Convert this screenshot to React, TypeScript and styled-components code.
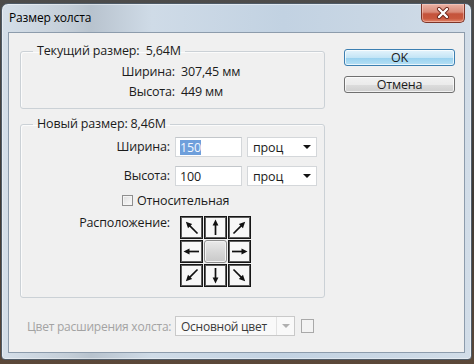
import React from 'react';
import styled, { createGlobalStyle } from 'styled-components';

const GlobalStyle = createGlobalStyle`
  html, body {
    margin: 0;
    padding: 0;
    background: #3b3631;
  }
  * {
    box-sizing: border-box;
  }
  body {
    font-family: "Open Sans", "Noto Sans", sans-serif;
    color: #1b1b1b;
    white-space: nowrap;
    letter-spacing: -0.15px;
  }
`;

const Backdrop = styled.div`
  width: 474px;
  height: 364px;
  padding: 3px 2px 4px 1px;
  overflow: hidden;
  background: linear-gradient(180deg, #4d4c4b 0%, #3e3934 55%, #5b4839 100%);
`;

const Window = styled.div`
  height: 100%;
  display: flex;
  flex-direction: column;
  padding: 0 6px 6px 6px;
  border: 1px solid #4f5b67;
  border-radius: 7px 7px 4px 4px;
  background:
    linear-gradient(90deg, #d5dfe9 0%, #c4ced8 14%, #b8c3ce 19%, #cfdbe7 32%, #c2d2e2 60%, #cbd8e5 85%, #d2dde8 100%);
  box-shadow: inset 0 0 0 1px rgba(255, 255, 255, 0.45);
`;

const TitleBar = styled.div`
  height: 28px;
  flex: none;
  display: flex;
  align-items: flex-start;
  justify-content: space-between;
  padding-left: 1px;
`;

const Title = styled.div`
  font-size: 12px;
  line-height: 27px;
  color: #000;
`;

const CloseButton = styled.div`
  width: 44px;
  height: 19px;
  display: flex;
  align-items: center;
  justify-content: center;
  border: 1px solid #7e3528;
  border-top: none;
  border-radius: 0 0 5px 5px;
  background: linear-gradient(180deg, #eab2a4 0%, #d98a78 45%, #c4533b 55%, #c9583e 80%, #e2866a 100%);
  box-shadow: inset 0 0 0 1px rgba(255, 220, 210, 0.45);
`;

const Client = styled.div`
  flex: 1;
  display: flex;
  align-items: flex-start;
  padding: 10px 0 0 11px;
  border: 1px solid #8d9cac;
  background: #f0f0f0;
`;

const MainColumn = styled.div`
  width: 305px;
  display: flex;
  flex-direction: column;
`;

const ButtonColumn = styled.div`
  width: 111px;
  margin-left: 19px;
  padding-top: 6px;
  display: flex;
  flex-direction: column;
  gap: 10px;
`;

const DialogButton = styled.div<{ $primary?: boolean }>`
  height: 17px;
  display: flex;
  align-items: center;
  justify-content: center;
  font-size: 12.5px;
  border-radius: 3px;
  border: 1px solid ${p => (p.$primary ? '#3c7fb1' : '#707070')};
  background: ${p =>
    p.$primary
      ? 'linear-gradient(180deg, #e5f4fc 0%, #c4e5f6 50%, #98d1ef 51%, #b6e0f5 100%)'
      : 'linear-gradient(180deg, #f2f2f2 0%, #ebebeb 50%, #dddddd 51%, #cfcfcf 100%)'};
  box-shadow: inset 0 0 0 1px rgba(255, 255, 255, 0.7);
`;

const GroupBox = styled.fieldset<{ $gap?: number }>`
  margin: ${p => p.$gap || 0}px 0 0 0;
  padding: 0;
  min-width: 0;
  border: 1px solid #cbd1d6;
  border-radius: 3px;
  box-shadow: inset 1px 1px 0 #fbfbfb;
`;

const Legend = styled.legend`
  margin-left: 12px;
  padding: 0 4px;
  font-size: 12.5px;
  line-height: 16px;
`;

const InfoGrid = styled.div`
  display: grid;
  grid-template-columns: 154px auto;
  column-gap: 6px;
  padding: 3px 0 6px;
  font-size: 12.5px;
  line-height: 20px;
`;

const FormGrid = styled.div`
  display: grid;
  grid-template-columns: 149px auto;
  column-gap: 5px;
  padding: 5px 0 10px;
  font-size: 12.5px;
`;

const Label = styled.div<{ $top?: boolean }>`
  text-align: right;
  line-height: ${p => (p.$top ? '16px' : '20px')};
  align-self: ${p => (p.$top ? 'start' : 'center')};
`;

const FieldRow = styled.div<{ $gap?: number }>`
  display: flex;
  gap: 5px;
  margin-top: ${p => p.$gap || 0}px;
`;

const LabelCell = styled(Label)<{ $gap?: number }>`
  margin-top: ${p => p.$gap || 0}px;
`;

const TextInput = styled.div`
  width: 67px;
  height: 20px;
  padding: 0 4px;
  display: flex;
  align-items: center;
  background: #fff;
  border: 1px solid #d4d7da;
  border-top-color: #c2c6ca;
`;

const Selected = styled.span`
  background: #6e9fdb;
  color: #f2f7ff;
  line-height: 15px;
`;

const Combo = styled.div<{ $width: number; $disabled?: boolean }>`
  width: ${p => p.$width}px;
  height: 20px;
  flex: none;
  display: flex;
  align-items: center;
  padding-left: 5px;
  background: ${p => (p.$disabled ? '#f9f9f9' : '#fff')};
  border: 1px solid ${p => (p.$disabled ? '#c9c9c9' : '#d4d7da')};
  color: ${p => (p.$disabled ? '#3a3a3a' : '#1b1b1b')};
`;

const ComboText = styled.span`
  flex: 1;
  overflow: hidden;
`;

const ComboArrow = styled.span<{ $disabled?: boolean }>`
  width: 18px;
  height: 100%;
  display: flex;
  align-items: center;
  justify-content: center;
  border-left: ${p => (p.$disabled ? '1px solid #e2e2e2' : 'none')};

  &::after {
    content: '';
    border-left: 4px solid transparent;
    border-right: 4px solid transparent;
    border-top: 4px solid ${p => (p.$disabled ? '#b0b0b0' : '#111')};
  }
`;

const CheckRow = styled.div`
  grid-column: 1 / span 2;
  height: 18px;
  margin-top: 5px;
  padding-left: 101px;
  display: flex;
  align-items: center;
  gap: 4px;
`;

const CheckBox = styled.span`
  width: 11px;
  height: 11px;
  border: 1px solid #8f8f8f;
  background: linear-gradient(135deg, #dedede, #fbfbfb);
  box-shadow: inset 0 0 0 1px #f4f4f4;
`;

const AnchorGrid = styled.div`
  margin: 7px 0 0 5px;
  display: grid;
  grid-template-columns: repeat(3, 23px);
  grid-template-rows: repeat(3, 23px);
  gap: 1px;
`;

const AnchorCell = styled.div<{ $center?: boolean }>`
  display: flex;
  align-items: center;
  justify-content: center;
  border: ${p => (p.$center ? '1px solid #8c8c8c' : '1px solid #151515')};
  border-radius: ${p => (p.$center ? '3px' : '0')};
  background: ${p =>
    p.$center ? 'linear-gradient(180deg, #eaeaea 0%, #d6d6d6 55%, #c9c9c9 100%)' : '#f7f7f7'};
  box-shadow: ${p => (p.$center ? 'inset 0 0 0 1px #f2f2f2' : 'inset 0 0 0 1px #5e5e5e')};
`;

const BottomRow = styled.div`
  margin-top: 18px;
  display: flex;
  align-items: center;
  font-size: 12px;
  letter-spacing: -0.25px;
`;

const DisabledLabel = styled.div`
  width: 155px;
  flex: none;
  padding-left: 7px;
  color: #a3a3a3;
`;

const Swatch = styled.span`
  width: 13px;
  height: 14px;
  flex: none;
  margin-left: 6px;
  border: 1px solid #a9a9a9;
  background: #f3f3f3;
`;

function Arrow({ angle }: { angle: number }) {
  const diagonal = angle % 90 !== 0;
  const start = diagonal ? 2 : 3;
  return (
    <svg width="21" height="21" viewBox="0 0 21 21">
      <g transform={`rotate(${angle} 10.5 10.5)`}>
        <line x1={start} y1="10.5" x2="13.5" y2="10.5" stroke="#111" strokeWidth="1.7" />
        <polygon points="12.5,7.6 18.5,10.5 12.5,13.4" fill="#111" />
      </g>
    </svg>
  );
}

const anchors: (number | null)[] = [-135, -90, -45, 180, null, 0, 135, 90, 45];

export default function App() {
  return (
    <>
      <GlobalStyle />
      <Backdrop>
        <Window>
          <TitleBar>
            <Title>Размер холста</Title>
            <CloseButton>
              <svg width="14" height="12" viewBox="0 0 14 12">
                <path d="M3 2 L11 10 M11 2 L3 10" stroke="#6a2418" strokeWidth="4" strokeLinecap="round" />
                <path d="M3 2 L11 10 M11 2 L3 10" stroke="#fff" strokeWidth="2.4" strokeLinecap="round" />
              </svg>
            </CloseButton>
          </TitleBar>
          <Client>
            <MainColumn>
              <GroupBox>
                <Legend>Текущий размер:&nbsp; 5,64M</Legend>
                <InfoGrid>
                  <Label>Ширина:</Label>
                  <div>307,45 мм</div>
                  <Label>Высота:</Label>
                  <div>449 мм</div>
                </InfoGrid>
              </GroupBox>
              <GroupBox $gap={7}>
                <Legend>Новый размер: 8,46M</Legend>
                <FormGrid>
                  <LabelCell>Ширина:</LabelCell>
                  <FieldRow>
                    <TextInput><Selected>150</Selected></TextInput>
                    <Combo $width={70}>
                      <ComboText>проц</ComboText>
                      <ComboArrow />
                    </Combo>
                  </FieldRow>
                  <LabelCell $gap={9}>Высота:</LabelCell>
                  <FieldRow $gap={9}>
                    <TextInput>100</TextInput>
                    <Combo $width={70}>
                      <ComboText>проц</ComboText>
                      <ComboArrow />
                    </Combo>
                  </FieldRow>
                  <CheckRow>
                    <CheckBox />
                    <span>Относительная</span>
                  </CheckRow>
                  <LabelCell $top $gap={6}>Расположение:</LabelCell>
                  <AnchorGrid>
                    {anchors.map((a, i) => (
                      <AnchorCell key={i} $center={a === null}>
                        {a !== null && <Arrow angle={a} />}
                      </AnchorCell>
                    ))}
                  </AnchorGrid>
                </FormGrid>
              </GroupBox>
              <BottomRow>
                <DisabledLabel>Цвет расширения холста:</DisabledLabel>
                <Combo $width={120} $disabled>
                  <ComboText>Основной цвет</ComboText>
                  <ComboArrow $disabled />
                </Combo>
                <Swatch />
              </BottomRow>
            </MainColumn>
            <ButtonColumn>
              <DialogButton $primary>OK</DialogButton>
              <DialogButton>Отмена</DialogButton>
            </ButtonColumn>
          </Client>
        </Window>
      </Backdrop>
    </>
  );
}
